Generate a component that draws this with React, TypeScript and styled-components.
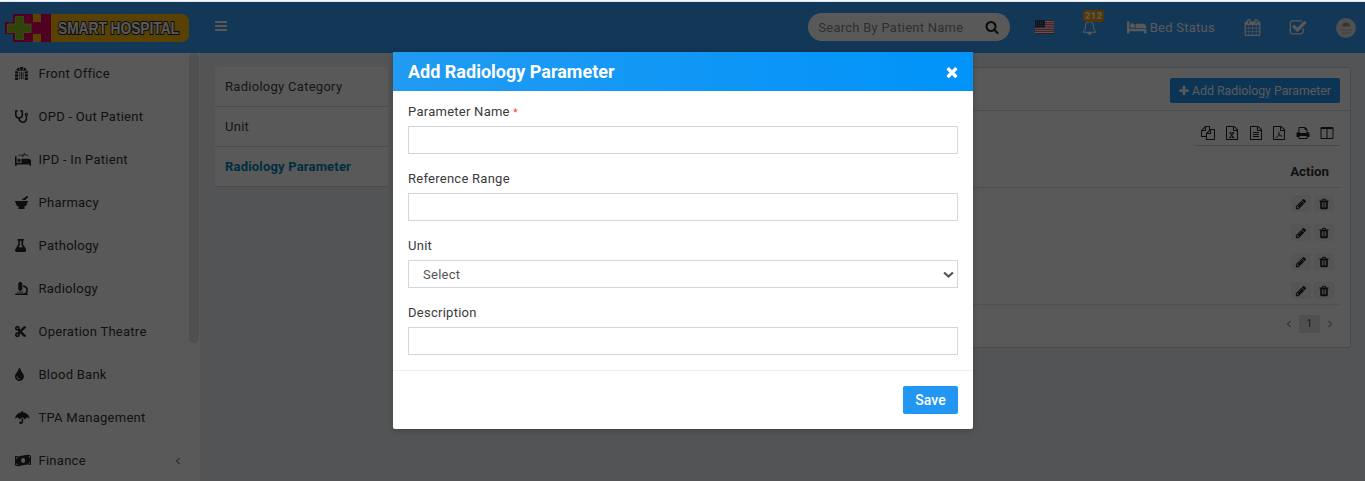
import React from "react";
import styled, { createGlobalStyle } from "styled-components";
import {
  FaDungeon, FaStethoscope, FaProcedures, FaMortarPestle, FaFlask,
  FaMicroscope, FaCut, FaTint, FaUmbrella, FaMoneyBillWave,
} from "react-icons/fa";

const Global = createGlobalStyle`
  * { box-sizing: border-box; }
  html, body { margin: 0; height: 100%; overflow: hidden; }
  body { font-family: Roboto, "Liberation Sans", sans-serif; font-size: 13px; letter-spacing: 0.26px; color: #333; background: #edf0f5; }
  #root { height: 100%; }
`;

const doc = "M1596 380q28 28 48 76t20 88v1152q0 40-28 68t-68 28h-1344q-40 0-68-28t-28-68v-1600q0-40 28-68t68-28h896q40 0 88 20t76 48zm-444-244v376h376q-10-29-22-41l-313-313q-12-12-41-22zm384 1528v-1024h-416q-40 0-68-28t-28-68v-416h-768v1536h1280z";

const paths = {
  bars: "M1664 1344v128q0 26-19 45t-45 19h-1408q-26 0-45-19t-19-45v-128q0-26 19-45t45-19h1408q26 0 45 19t19 45zm0-512v128q0 26-19 45t-45 19h-1408q-26 0-45-19t-19-45v-128q0-26 19-45t45-19h1408q26 0 45 19t19 45zm0-512v128q0 26-19 45t-45 19h-1408q-26 0-45-19t-19-45v-128q0-26 19-45t45-19h1408q26 0 45 19t19 45z",
  search: "M1216 832q0-185-131.500-316.500t-316.500-131.500-316.500 131.500-131.500 316.500 131.500 316.500 316.500 131.500 316.500-131.500 131.500-316.500zm512 832q0 52-38 90t-90 38q-54 0-90-38l-343-342q-179 124-399 124-143 0-273.500-55.500t-225-150-150-225-55.500-273.500 55.500-273.500 150-225 225-150 273.500-55.500 273.500 55.500 225 150 150 225 55.500 273.500q0 220-124 399l343 343q37 37 37 90z",
  plus: "M1600 736v192q0 40-28 68t-68 28h-416v416q0 40-28 68t-68 28h-192q-40 0-68-28t-28-68v-416h-416q-40 0-68-28t-28-68v-192q0-40 28-68t68-28h416v-416q0-40 28-68t68-28h192q40 0 68 28t28 68v416h416q40 0 68 28t28 68z",
  check: "M1472 930v318q0 119-84.500 203.500t-203.500 84.500h-832q-119 0-203.500-84.500t-84.500-203.500v-832q0-119 84.500-203.500t203.500-84.500h832q63 0 117 25 15 7 18 23 3 17-9 29l-49 49q-10 10-23 10-3 0-9-2-23-6-45-6h-832q-66 0-113 47t-47 113v832q0 66 47 113t113 47h832q66 0 113-47t47-113v-254q0-13 9-22l64-64q10-10 23-10 6 0 12 3 20 8 20 29zm231-489l-814 814q-24 24-57 24t-57-24l-430-430q-24-24-24-57t24-57l110-110q24-24 57-24t57 24l263 263 647-647q24-24 57-24t57 24l110 110q24 24 24 57t-24 57z",
  calendar: "M192 1664h288v-288h-288v288zm352 0h320v-288h-320v288zm-352-352h288v-320h-288v320zm352 0h320v-320h-320v320zm-352-384h288v-288h-288v288zm736 736h320v-288h-320v288zm-384-736h320v-288h-320v288zm768 736h288v-288h-288v288zm-384-352h320v-320h-320v320zm-352-864v-288q0-13-9.500-22.500t-22.500-9.500h-64q-13 0-22.500 9.500t-9.500 22.500v288q0 13 9.500 22.500t22.500 9.500h64q13 0 22.500-9.500t9.500-22.500zm736 864h288v-320h-288v320zm-384-384h320v-288h-320v288zm384 0h288v-288h-288v288zm32-480v-288q0-13-9.500-22.500t-22.500-9.500h-64q-13 0-22.500 9.500t-9.500 22.500v288q0 13 9.500 22.500t22.500 9.500h64q13 0 22.500-9.500t9.500-22.500zm384-64v1280q0 52-38 90t-90 38h-1408q-52 0-90-38t-38-90v-1280q0-52 38-90t90-38h128v-96q0-66 47-113t113-47h64q66 0 113 47t47 113v96h384v-96q0-66 47-113t113-47h64q66 0 113 47t47 113v96h128q52 0 90 38t38 90z",
  pencil: "M491 1536l91-91-235-235-91 91v107h128v128h107zm523-928q0-22-22-22-10 0-17 7l-542 542q-7 7-7 17 0 22 22 22 10 0 17-7l542-542q7-7 7-17zm-54-192l416 416-832 832h-416v-416zm683 96q0 53-37 90l-166 166-416-416 166-165q36-38 90-38 53 0 91 38l235 234q37 39 37 91z",
  trash: "M704 1376v-704q0-14-9-23t-23-9h-64q-14 0-23 9t-9 23v704q0 14 9 23t23 9h64q14 0 23-9t9-23zm256 0v-704q0-14-9-23t-23-9h-64q-14 0-23 9t-9 23v704q0 14 9 23t23 9h64q14 0 23-9t9-23zm256 0v-704q0-14-9-23t-23-9h-64q-14 0-23 9t-9 23v704q0 14 9 23t23 9h64q14 0 23-9t9-23zm-544-992h448l-48-117q-7-9-17-11h-317q-10 2-17 11zm928 32v64q0 14-9 23t-23 9h-96v948q0 83-47 143.500t-113 60.500h-832q-66 0-113-58.500t-47-141.500v-952h-96q-14 0-23-9t-9-23v-64q0-14 9-23t23-9h309l70-167q15-37 54-63t79-26h320q40 0 79 26t54 63l70 167h309q14 0 23 9t9 23z",
  copy: "M1696 384q40 0 68 28t28 68v1216q0 40-28 68t-68 28h-960q-40 0-68-28t-28-68v-288h-544q-40 0-68-28t-28-68v-672q0-40 20-88t48-76l408-408q28-28 76-48t88-20h416q40 0 68 28t28 68v328q68-40 128-40h416zm-544 213l-299 299h299v-299zm-640-384l-299 299h299v-299zm196 647l316-316v-416h-384v416q0 40-28 68t-68 28h-416v640h512v-256q0-40 20-88t48-76zm956 804v-1152h-384v416q0 40-28 68t-68 28h-416v640h896z",
  excel: doc + "M500 1430v106h300v-106h-75l110-165 115 165h-80v106h320v-106h-70l-190-260 185-250h70v-106h-285v106h73l-100 148-105-148h78v-106h-312v106h72l182 250-190 260z",
  text: doc + "M512 800q0-14 9-23t23-9h704q14 0 23 9t9 23v64q0 14-9 23t-23 9h-704q-14 0-23-9t-9-23zm0 256q0-14 9-23t23-9h704q14 0 23 9t9 23v64q0 14-9 23t-23 9h-704q-14 0-23-9t-9-23zm0 256q0-14 9-23t23-9h704q14 0 23 9t9 23v64q0 14-9 23t-23 9h-704q-14 0-23-9t-9-23z",
  pdf: doc + "M850 750c-50 60-30 170 5 260c-40 110-90 220-140 310c-110 50-220 120-250 210c110 40 200-70 290-190c80-30 190-55 280-68c90 55 200 90 280 60c60-50 0-125-210-110c-70-50-120-110-155-190c25-100 35-230-40-285zm50 410q50 70 110 115l-170 35q40-80 60-150z",
  columns: "M224 1536h608v-1152h-640v1120q0 13 9.500 22.500t22.500 9.500zm1376-32v-1120h-640v1152h608q13 0 22.500-9.500t9.500-22.500zm128-1216v1216q0 66-47 113t-113 47h-1344q-66 0-113-47t-47-113v-1216q0-66 47-113t113-47h1344q66 0 113 47t47 113z",
  print: "M448 1536h896v-256h-896v256zm0-640h896v-384h-160q-40 0-68-28t-28-68v-160h-640v640zm1152 64q0-26-19-45t-45-19-45 19-19 45 19 45 45 19 45-19 19-45zm128 0v416q0 13-9.500 22.500t-22.500 9.500h-224v160q0 40-28 68t-68 28h-960q-40 0-68-28t-28-68v-160h-224q-13 0-22.500-9.500t-9.500-22.500v-416q0-79 56.500-135.500t135.500-56.500h64v-544q0-40 28-68t68-28h672q40 0 88 20t76 48l152 152q28 28 48 76t20 88v256h64q79 0 135.500 56.500t56.500 135.500z",
  bed: "M256 1024h1728q26 0 45 19t19 45v448h-256v-256h-1536v256h-256v-1216q0-26 19-45t45-19h128q26 0 45 19t19 45v704zm576-320q0-106-75-181t-181-75-181 75-75 181 75 181 181 75 181-75 75-181zm1216 256v-64q0-159-112.500-271.500t-271.500-112.500h-704q-26 0-45 19t-19 45v384h1152z",
  bell: "M912 1696q0-16-16-16-59 0-101.500-42.500t-42.500-101.500q0-16-16-16t-16 16q0 73 51.500 124.500t124.500 51.500q16 0 16-16zm-666-288h1300q-266-300-266-832 0-51-24-105t-69-103-121.500-80.500-169.500-31.500-169.500 31.500-121.500 80.500-69 103-24 105q0 532-266 832zm1482 0q0 52-38 90t-90 38h-448q0 106-75 181t-181 75-181-75-75-181h-448q-52 0-90-38t-38-90q50-42 91-88t85-119.500 74.500-158.500 50-206 19.500-260q0-152 117-282.500t307-158.500q-8-19-8-39 0-40 28-68t68-28 68 28 28 68q0 20-8 39 190 28 307 158.500t117 282.500q0 139 19.500 260t50 206 74.500 158.500 85 119.500 91 88z",
  times: "M1490 1322q0 40-28 68l-136 136q-28 28-68 28t-68-28l-294-294-294 294q-28 28-68 28t-68-28l-136-136q-28-28-28-68t28-68l294-294-294-294q-28-28-28-68t28-68l136-136q28-28 68-28t68 28l294 294 294-294q28-28 68-28t68 28l136 136q28 28 28 68t-28 68l-294 294 294 294q28 28 28 68z",
};

const Svg = styled.svg`
  display: block;
  flex: none;
  fill: currentColor;
`;

function Glyph({ name, size, wide = 1792 }: { name: keyof typeof paths; size: number; wide?: number }) {
  return (
    <Svg viewBox={`0 0 ${wide} 1792`} width={(size * wide) / 1792} height={size}>
      <path d={paths[name]} />
    </Svg>
  );
}

function Chevron({ dir, size = 8 }: { dir: "left" | "right" | "down"; size?: number }) {
  const d = { left: "M5.500 1 2.500 4l3 3", right: "M2.500 1l3 3-3 3", down: "M.8 2.500l3.200 3 3.200-3" }[dir];
  return (
    <Svg viewBox="0 0 8 8" width={size} height={size}>
      <path d={d} fill="none" stroke="currentColor" strokeWidth={dir === "down" ? 1.6 : 1} />
    </Svg>
  );
}

const Screen = styled.div`
  position: relative;
  height: 481px;
  width: 1365px;
  display: flex;
  flex-direction: column;
  overflow: hidden;
`;
const TopStrip = styled.div`
  flex: none;
  height: 2px;
  background: #f5f9fc;
  border-bottom: 1px solid #d9e6f1;
`;
const TopBar = styled.header`
  flex: none;
  height: 51px;
  display: flex;
  align-items: center;
  background: #369dfa;
  color: #fff;
  padding: 0 9px 0 5px;
`;
const Toggle = styled.div`
  margin: 0 0 3px 24px;
`;
const Search = styled.div`
  margin: 0 0 1px auto;
  width: 202px;
  height: 28px;
  border-radius: 14px;
  background: #fff;
  color: #888;
  display: flex;
  align-items: center;
  justify-content: space-between;
  padding: 0 11px 0 10px;
  svg { color: #222; }
`;
const Flag = styled.svg`
  display: block;
  margin: 0 0 1px 25px;
`;
const BellBox = styled.div`
  position: relative;
  margin-left: 28px;
`;
const Badge = styled.span`
  position: absolute;
  left: 1px;
  top: -10px;
  width: 21px;
  height: 12px;
  border-radius: 3px;
  background: #f39c12;
  font-size: 9.500px;
  font-weight: 900;
  line-height: 12px;
  text-align: center;
`;
const BedStatus = styled.div`
  display: flex;
  align-items: center;
  gap: 3px;
  margin: 0 0 1px 30px;
`;
const BarIcon = styled.div<{ $gap: number }>`
  margin-left: ${(p) => p.$gap}px;
`;

const Body = styled.div`
  flex: 1;
  display: flex;
  align-items: flex-start;
  min-height: 0;
`;
const Sidebar = styled.nav`
  width: 200px;
  height: 428px;
  flex: none;
  display: flex;
  background: #fff;
  overflow: hidden;
`;
const Menu = styled.div`
  flex: 1;
  margin-top: -1px;
`;
const MenuItem = styled.div`
  height: 43px;
  display: flex;
  align-items: center;
  padding: 0 7px 0 15px;
  color: #333;
  > span { flex: 1; }
`;
const MenuIcon = styled.div<{ $units: number }>`
  width: 23.500px;
  display: flex;
  color: #2a2a2a;
  svg {
    flex: none;
    width: ${(p) => (p.$units / 512) * 13}px;
    height: 13px;
  }
`;
const Scrollbar = styled.div`
  width: 10px;
  height: 290px;
  margin-right: 1px;
  border-radius: 5px;
  background: #e4e4e4;
`;

const Settings = styled.div`
  width: 173px;
  margin: 14px 0 0 15px;
  background: #fff;
  border-radius: 3px;
`;
const SettingsItem = styled.div<{ $active?: boolean }>`
  height: 40px;
  line-height: 39px;
  padding-left: 10px;
  border-bottom: 1px solid #d6d6d6;
  color: ${(p) => (p.$active ? "#0084b4" : "#444")};
  font-weight: ${(p) => (p.$active ? 700 : 400)};
  letter-spacing: ${(p) => (p.$active ? 0.18 : 0.28)}px;
`;

const Card = styled.section`
  flex: 1;
  height: 281px;
  margin: 14px 14px 0 15px;
  background: #fff;
  border: 1px solid #ccd6da;
  border-radius: 3px;
`;
const CardHead = styled.div`
  height: 43px;
  display: flex;
  justify-content: flex-end;
  padding: 10px 10px 0 0;
  border-bottom: 1px solid #dadedf;
`;
const AddButton = styled.button`
  width: 170px;
  height: 25px;
  display: flex;
  align-items: center;
  justify-content: center;
  gap: 2px;
  padding: 0 1px 0 0;
  border: 0;
  border-radius: 2px;
  background: #2196f3;
  color: #fff;
  font: 12.300px Roboto, sans-serif;
  letter-spacing: 0;
`;
const CardBody = styled.div`
  padding: 9px 10px;
  display: flex;
  flex-direction: column;
`;
const Tools = styled.div`
  align-self: flex-end;
  width: 145px;
  height: 26px;
  display: flex;
  align-items: center;
  justify-content: space-between;
  padding: 0 6px;
  color: #222;
  border-bottom: 1px solid #cfcfcf;
`;
const TableHead = styled.div`
  height: 42px;
  line-height: 51px;
  padding-right: 11px;
  text-align: right;
  font-size: 13.300px;
  font-weight: 700;
  letter-spacing: 0;
  border-bottom: 1px solid #ddd;
`;
const Rows = styled.div`
  height: 117px;
  border-bottom: 1px solid #e8e8e8;
  padding-top: 1px;
`;
const Row = styled.div`
  height: 29px;
  display: flex;
  align-items: center;
  justify-content: flex-end;
  gap: 3px;
  padding-right: 6px;
`;
const IconButton = styled.span`
  width: 20px;
  height: 17px;
  display: flex;
  align-items: center;
  justify-content: center;
  border-radius: 2px;
  background: #f4f4f4;
  color: #222;
`;
const Pager = styled.div`
  display: flex;
  align-items: center;
  justify-content: flex-end;
  gap: 6px;
  margin-top: 10px;
  padding-right: 6px;
  color: #555;
`;
const PageNumber = styled.span`
  width: 21px;
  height: 18px;
  line-height: 18px;
  text-align: center;
  font-size: 11px;
  background: #e6e6e6;
`;

const Backdrop = styled.div`
  position: absolute;
  inset: 2px 0 0;
  display: flex;
  align-items: flex-start;
  justify-content: center;
  padding: 50px 0 0 1px;
  background: rgba(0, 0, 0, 0.65);
`;
const Modal = styled.div`
  width: 580px;
  height: 377px;
  background: #fff;
  border-radius: 2px;
  overflow: hidden;
  box-shadow: 0 2px 6px rgba(0, 0, 0, 0.2);
`;
const ModalHead = styled.div`
  height: 39px;
  display: flex;
  align-items: center;
  justify-content: space-between;
  padding: 0 13px 0 15px;
  color: #fff;
  font-size: 18px;
  font-weight: 700;
  letter-spacing: 0;
  background: linear-gradient(to right, #219bf3, #0093f9);
`;
const Form = styled.div`
  height: 280px;
  padding: 11px 15px 0;
  border-bottom: 1px solid #f0f0f0;
`;
const Field = styled.label`
  display: block;
  height: 67px;
  color: #3a3a3a;
`;
const Caption = styled.div`
  height: 24px;
  line-height: 19px;
`;
const Required = styled.span`
  color: #f33;
  font-size: 10px;
`;
const Input = styled.div`
  width: 550px;
  height: 28px;
  display: flex;
  align-items: center;
  justify-content: space-between;
  padding: 0 3px 0 14px;
  border: 1px solid #d2d6de;
  color: #555;
`;
const ModalFoot = styled.div`
  display: flex;
  justify-content: flex-end;
  padding: 15px;
`;
const Save = styled.button`
  width: 55px;
  height: 28px;
  border: 0;
  border-radius: 2px;
  background: #2196f3;
  color: #fff;
  font: 500 14px Roboto, sans-serif;
  letter-spacing: 0;
  padding: 0;
`;

const LogoSvg = styled.svg`
  display: block;
  overflow: visible;
`;

function Logo() {
  return (
    <LogoSvg width="185" height="28" viewBox="0 0 185 28">
      <path d="M46 0h131a7 7 0 0 1 7 7v14a7 7 0 0 1-7 7H46z" fill="#fdb90a" />
      <path d="M8 0h38v28H8v-8H0V8h8z" fill="#e5005c" />
      <path d="M28 0h8v8h-8zM28 20h8v8h-8z" fill="#fdb90a" />
      <path d="M10.500 2.500h8v7.500h7.500v8.500h-7.500v7h-8v-7h-8V10h8z" fill="#8cc122" stroke="#a8c95c" strokeWidth="1" />
      <text
        x="53" y="20" textLength="121" lengthAdjust="spacingAndGlyphs"
        fontFamily="'Liberation Sans Narrow', 'Liberation Sans', sans-serif" fontWeight="700" fontSize="16.500"
        fill="#fff" stroke="#222" strokeWidth="2.200" paintOrder="stroke" letterSpacing="0"
      >
        SMART HOSPITAL
      </text>
    </LogoSvg>
  );
}

const menu = [
  { label: "Front Office", icon: <FaDungeon />, units: 512 },
  { label: "OPD - Out Patient", icon: <FaStethoscope />, units: 512 },
  { label: "IPD - In Patient", icon: <FaProcedures />, units: 640 },
  { label: "Pharmacy", icon: <FaMortarPestle />, units: 512 },
  { label: "Pathology", icon: <FaFlask />, units: 448 },
  { label: "Radiology", icon: <FaMicroscope />, units: 512 },
  { label: "Operation Theatre", icon: <FaCut />, units: 448 },
  { label: "Blood Bank", icon: <FaTint />, units: 352 },
  { label: "TPA Management", icon: <FaUmbrella />, units: 576 },
  { label: "Finance", icon: <FaMoneyBillWave />, units: 640, nested: true },
];

export default function App() {
  return (
    <Screen>
      <Global />
      <TopStrip />
      <TopBar>
        <Logo />
        <Toggle><Glyph name="bars" size={14} /></Toggle>
        <Search>
          <span>Search By Patient Name</span>
          <Glyph name="search" size={14} />
        </Search>
        <Flag width="19" height="14" viewBox="0 0 19 14">
          <path d="M0 0h19v14H0z" fill="#fff" />
          <path d="M0 .5h19M0 2.700h19M0 4.800h19M0 7h19M0 9.200h19M0 11.300h19M0 13.500h19" stroke="#c43a4c" strokeWidth="1.100" />
          <path d="M0 0h10v7.500H0z" fill="#333a68" />
          <path d="M1 1.500h8M1 3.500h8M1 5.500h8" stroke="#8a8eac" strokeWidth=".6" strokeDasharray="1 1" />
        </Flag>
        <BellBox>
          <Glyph name="bell" size={15} />
          <Badge>212</Badge>
        </BellBox>
        <BedStatus>
          <Glyph name="bed" size={17} wide={2048} />
          <span>Bed Status</span>
        </BedStatus>
        <BarIcon $gap={29}><Glyph name="calendar" size={17} /></BarIcon>
        <BarIcon $gap={28}><Glyph name="check" size={18} /></BarIcon>
        <BarIcon $gap={29}>
          <Svg width="20" height="20" viewBox="0 0 20 20">
            <circle cx="10" cy="10" r="10" fill="#e4e4e4" />
            <path d="M6 8.500a4 4 0 0 1 8 0z" fill="#999" />
            <path d="M4 12h12M6 15h8" stroke="#b5b5b5" />
          </Svg>
        </BarIcon>
      </TopBar>
      <Body>
        <Sidebar>
          <Menu>
            {menu.map((m) => (
              <MenuItem key={m.label}>
                <MenuIcon $units={m.units}>{m.icon}</MenuIcon>
                <span>{m.label}</span>
                {m.nested && <Chevron dir="left" />}
              </MenuItem>
            ))}
          </Menu>
          <Scrollbar />
        </Sidebar>
        <Settings>
          <SettingsItem>Radiology Category</SettingsItem>
          <SettingsItem>Unit</SettingsItem>
          <SettingsItem $active>Radiology Parameter</SettingsItem>
        </Settings>
        <Card>
          <CardHead>
            <AddButton><Glyph name="plus" size={12} />Add Radiology Parameter</AddButton>
          </CardHead>
          <CardBody>
            <Tools>
              <Glyph name="copy" size={14} />
              <Glyph name="excel" size={14} />
              <Glyph name="text" size={14} />
              <Glyph name="pdf" size={14} />
              <Glyph name="print" size={14} />
              <Glyph name="columns" size={14} />
            </Tools>
            <TableHead>Action</TableHead>
            <Rows>
              {[1, 2, 3, 4].map((n) => (
                <Row key={n}>
                  <IconButton><Glyph name="pencil" size={12} /></IconButton>
                  <IconButton><Glyph name="trash" size={12} /></IconButton>
                </Row>
              ))}
            </Rows>
            <Pager>
              <Chevron dir="left" />
              <PageNumber>1</PageNumber>
              <Chevron dir="right" />
            </Pager>
          </CardBody>
        </Card>
      </Body>
      <Backdrop>
        <Modal>
          <ModalHead>
            <span>Add Radiology Parameter</span>
            <Glyph name="times" size={16} />
          </ModalHead>
          <Form>
            <Field><Caption>Parameter Name <Required>*</Required></Caption><Input /></Field>
            <Field><Caption>Reference Range</Caption><Input /></Field>
            <Field><Caption>Unit</Caption><Input><span>Select</span><Chevron dir="down" size={11} /></Input></Field>
            <Field><Caption>Description</Caption><Input /></Field>
          </Form>
          <ModalFoot><Save>Save</Save></ModalFoot>
        </Modal>
      </Backdrop>
    </Screen>
  );
}
